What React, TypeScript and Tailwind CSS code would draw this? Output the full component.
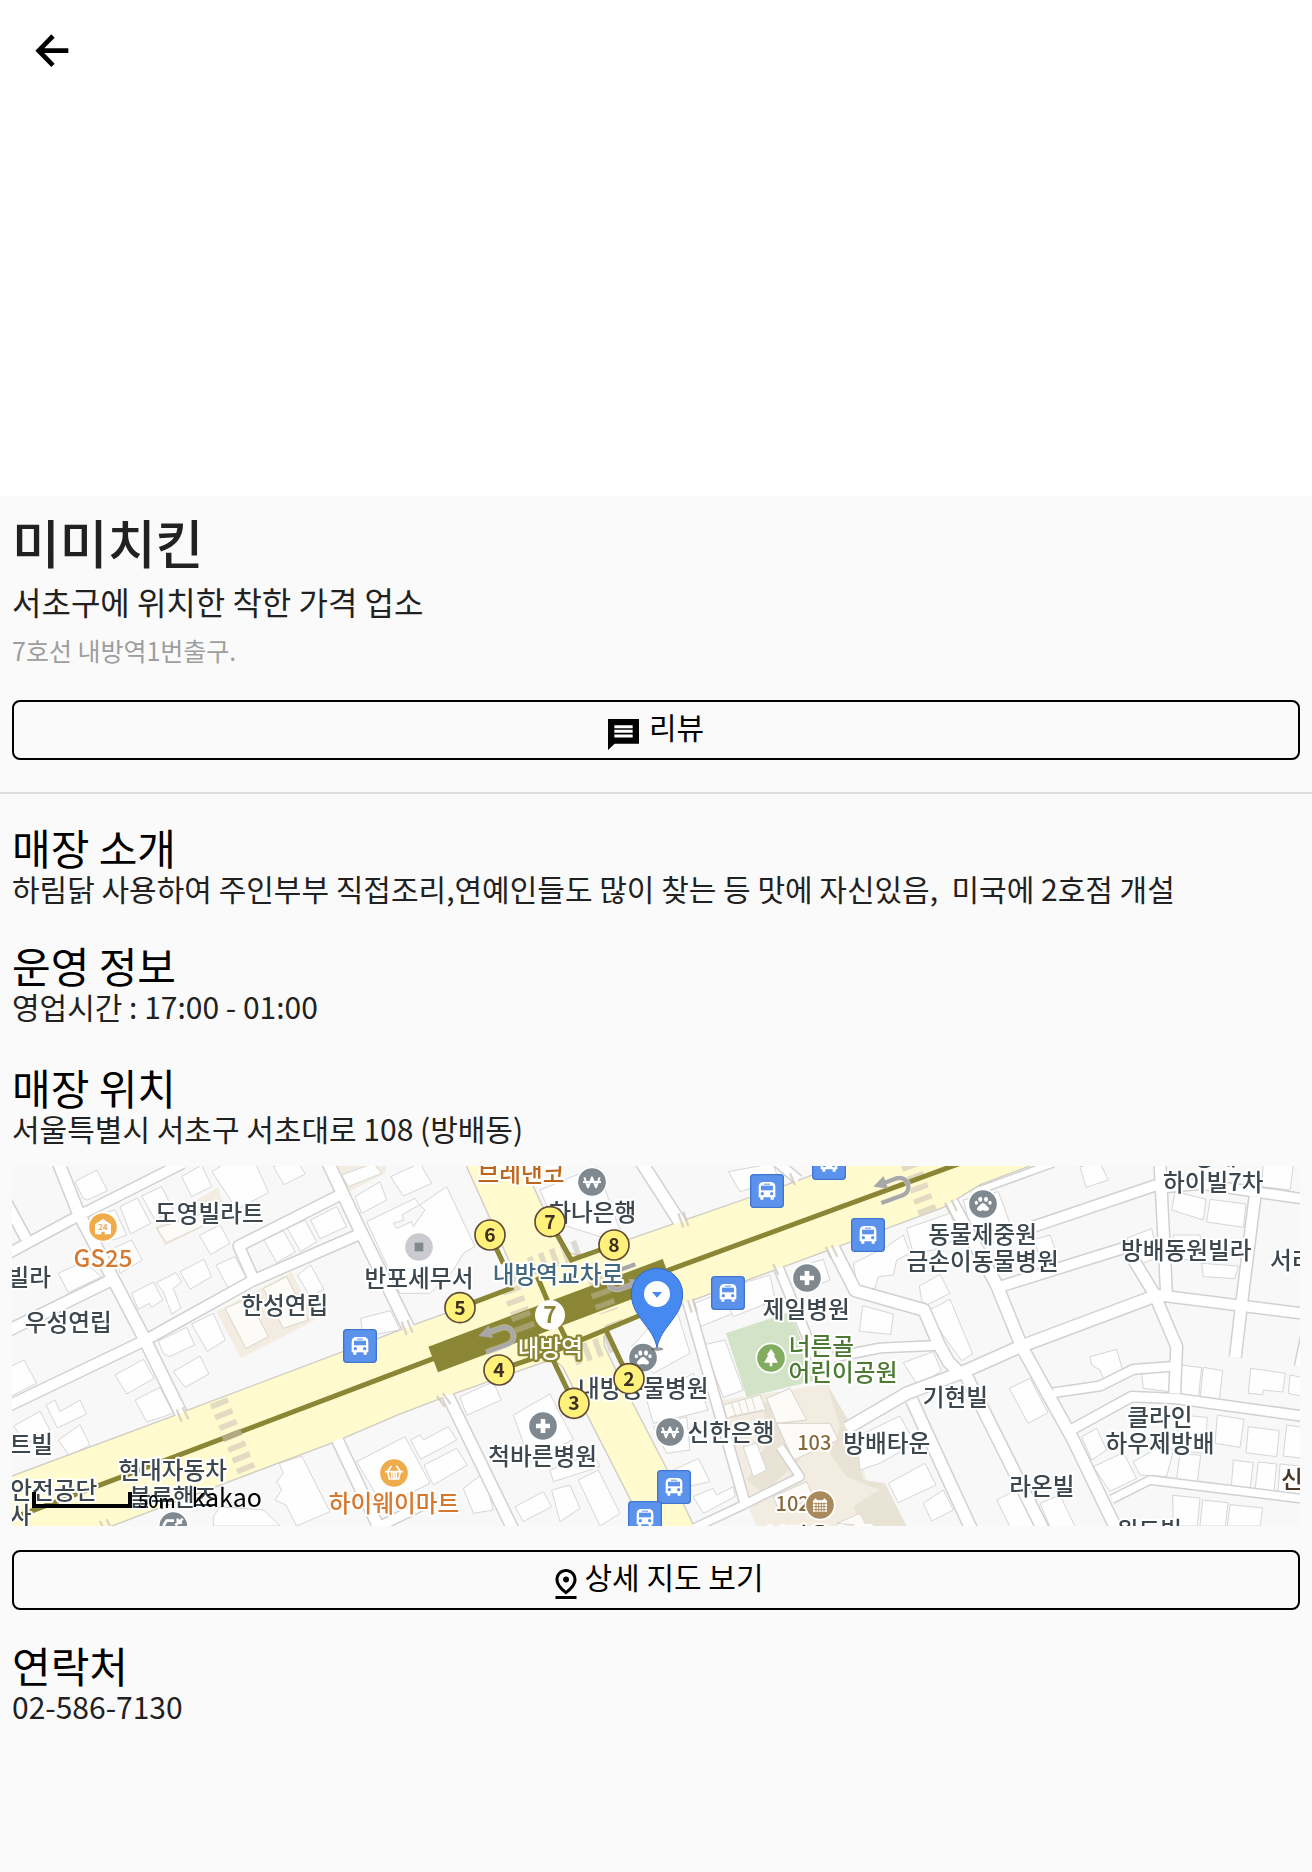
import type { ReactNode } from "react";
import { MdOutlinePinDrop } from "react-icons/md";

/* Map geometry is drawn in a 3864 x 1080 grid, three units to a pixel. */

const streets: { d: string; w: number }[] = [
  { d: "M172 0L236 160L430 530L548 770", w: 34 },
  { d: "M20 283L240 165L548 10", w: 28 },
  { d: "M10 110L78 236", w: 30 },
  { d: "M20 514L330 362", w: 32 },
  { d: "M20 740L437 540L758 362L1080 222", w: 30 },
  { d: "M760 356L716 258L1020 105", w: 30 },
  { d: "M985 10L1080 210L1228 510", w: 34 },
  { d: "M1010 835L1140 1110", w: 32 },
  { d: "M1120 1108L1300 1020", w: 26 },
  { d: "M1340 700L1540 1110", w: 32 },
  { d: "M1920 0L2048 200", w: 34 },
  { d: "M2325 0L2395 60", w: 26 },
  { d: "M2062 420L2235 1030", w: 28 },
  { d: "M2080 1105L2230 1035L2400 950L2340 860", w: 22 },
  { d: "M2330 310L2450 600", w: 26 },
  { d: "M2496 255L2566 392L2772 450L2815 550L2845 605L2880 640", w: 34 },
  { d: "M2500 592L2640 564L2815 556", w: 26 },
  { d: "M2540 805L2720 700L2880 640L3060 560L3460 410", w: 34 },
  { d: "M2735 720L2915 1110", w: 34 },
  { d: "M2895 640L3130 1110", w: 34 },
  { d: "M2855 125L2990 375L3065 560L3220 840L3350 1110", w: 34 },
  { d: "M3000 380L3400 255", w: 30 },
  { d: "M3100 200L3470 75", w: 30 },
  { d: "M2940 90L3160 10", w: 18 },
  { d: "M3480 10L3500 410", w: 32 },
  { d: "M3395 290L3462 400L3530 560L3524 700", w: 32 },
  { d: "M3470 85L3600 72L3920 118", w: 28 },
  { d: "M3765 110L3725 430L3706 592", w: 32 },
  { d: "M3470 405L3920 462", w: 30 },
  { d: "M3160 698L3300 678L3400 628L3530 618", w: 26 },
  { d: "M3220 806L3395 710L3530 716L3920 770", w: 28 },
  { d: "M3335 1018L3450 960L3920 1018", w: 22 },
  { d: "M3920 500L3895 620", w: 20 },
];

const blocks = [
  "M225 65L290 30L323 92L262 120L250 115Z",
  "M545 50L605 15L635 80L575 110Z",
  "M636 35L690 0L770 18L806 98L710 148Z",
  "M820 20L890 0L916 42L852 74Z",
  "M360 140L412 114L452 190L392 222Z",
  "M425 108L485 80L520 150L465 180Z",
  "M290 165L345 150L380 225L340 240Z",
  "M340 265L395 240L427 300L360 340Z",
  "M175 340L250 305L305 350L205 398Z",
  "M598 226L660 195L690 250L632 284Z",
  "M792 240L850 212L886 276L830 308Z",
  "M862 205L915 180L950 245L902 275Z",
  "M932 180L1010 140L1040 200L960 236Z",
  "M540 335L612 298L635 350L570 388Z",
  "M648 315L705 290L740 355L684 384Z",
  "M395 400L460 366L488 420L455 442L448 430L415 448Z",
  "M468 368L528 338L545 365L520 385L543 445L515 462L490 395Z",
  "M892 345L932 315L972 388L930 410Z",
  "M475 543L560 502L584 555L508 590L490 580Z",
  "M575 492L640 460L676 540L622 574Z",
  "M520 635L600 588L627 642L555 682Z",
  "M345 645L430 598L462 655L380 702Z",
  "M405 720L480 682L520 760L440 786Z",
  "M30 620L72 600L110 670L30 710Z",
  "M40 798L120 754L150 810L80 850Z",
  "M138 735L165 720L180 755L240 720L260 762L172 804Z",
  "M175 840L240 794L270 855L208 888Z",
  "M1082 475L1172 452L1200 510L1090 530Z",
  "M1025 45L1120 10L1145 40L1045 80Z",
  "M1065 110L1140 65L1160 120L1085 160Z",
  "M1172 50L1260 10L1295 70L1210 108Z",
  "M1100 185L1245 115L1258 135L1205 165L1212 180L1180 190L1190 205L1235 185L1240 200L1275 150L1260 135L1340 80L1425 260L1390 280L1360 330L1290 400L1200 400Z",
  "M1070 905L1215 830L1290 970L1150 1040Z",
  "M1232 840L1260 825L1270 840L1345 800L1370 840L1262 898Z",
  "M1272 915L1370 865L1402 915L1300 975Z",
  "M838 910L905 888L990 1055L890 1098L858 1035L825 1020L845 990L830 965L850 940Z",
  "M640 1070L660 1040L790 1050L840 1098H640Z",
  "M1380 710L1480 665L1504 720L1400 766Z",
  "M1540 765L1650 702L1720 838L1590 905Z",
  "M1390 985L1450 940L1480 1050L1420 1060Z",
  "M1545 1040L1630 995L1655 1040L1570 1085Z",
  "M1655 990L1710 975L1740 1045L1680 1085Z",
  "M1735 960L1795 930L1860 1060L1800 1098Z",
  "M1650 930L1780 880L1800 920L1660 965Z",
  "M1620 90L1790 20L1860 210L1800 230L1690 195L1650 160Z",
  "M1895 560L1960 490L2030 450L2070 580L1960 640Z",
  "M2085 430L2170 395L2200 460L2100 500Z",
  "M2110 555L2175 540L2230 690L2170 712Z",
  "M2160 390L2310 345L2325 420L2200 470Z",
  "M2185 35L2320 10L2335 60L2220 95Z",
  "M1940 720L2080 640L2125 750L1960 790Z",
  "M1960 800L2060 770L2070 870L2000 880Z",
  "M2010 935L2095 895L2130 965L2040 985Z",
  "M2080 1010L2140 985L2150 1005L2200 980L2205 1010L2110 1060Z",
  "M2230 860L2270 850L2300 930L2260 950Z",
  "M2430 310L2470 298L2490 360L2440 380Z",
  "M2720 205L2850 160L2880 230L2800 270L2740 280Z",
  "M2660 260L2710 225L2730 280L2690 300L2680 345L2635 350L2625 385L2590 390L2570 370L2560 310Z",
  "M2588 437L2680 462L2672 523L2578 514Z",
  "M2758 378L2820 343L2850 400L2780 435L2765 420Z",
  "M2788 450L2850 418L2918 582L2885 602L2825 520Z",
  "M2890 120L2995 95L3030 190L2920 240Z",
  "M2710 608L2800 575L2824 632L2755 680Z",
  "M2570 830L2700 768L2745 850L2640 910L2580 930Z",
  "M2665 970L2775 910L2808 975L2695 1028Z",
  "M2770 1030L2830 990L2860 1050L2795 1083Z",
  "M3028 685L3090 655L3144 758L3084 790Z",
  "M2990 1020L3060 985L3120 1100H3030Z",
  "M3120 1030L3180 1005L3225 1100H3150Z",
  "M3270 590L3350 568L3368 632L3310 655L3300 630L3275 615Z",
  "M3425 640L3510 635L3508 695L3430 685Z",
  "M3245 830L3290 805L3320 870L3275 900Z",
  "M3280 920L3370 878L3410 955L3330 994Z",
  "M3400 905L3480 860L3520 870L3500 950L3420 945Z",
  "M3545 615L3605 623L3595 714L3540 705Z",
  "M3610 622L3668 632L3658 720L3600 714Z",
  "M3752 625L3856 640L3848 696L3790 690L3788 704L3745 700Z",
  "M3870 645L3920 655V712L3865 700Z",
  "M3652 765L3732 778L3720 862L3645 850Z",
  "M3745 800L3838 812L3830 890L3738 878Z",
  "M3860 795L3920 804V896L3850 888Z",
  "M3540 765L3622 772L3612 880L3532 870Z",
  "M3540 880L3602 886L3592 966L3530 956Z",
  "M3700 900L3760 908L3750 988L3694 980Z",
  "M3775 906L3830 912L3822 996L3765 988Z",
  "M3840 912L3920 920V1006L3834 998Z",
  "M3518 1006L3600 1014L3592 1098H3520Z",
  "M3608 1020L3684 1028L3676 1098H3600Z",
  "M3690 1034L3788 1044L3780 1098H3682Z",
  "M3525 95L3618 118L3610 180L3515 150Z",
  "M3630 118L3738 132L3730 202L3620 186Z",
  "M3520 225L3600 225L3610 310L3520 290Z",
  "M3605 310L3715 318L3705 356L3610 350Z",
  "M3790 10L3880 15L3870 90L3785 80Z",
  "M3240 20L3300 10L3325 60L3258 82Z",
  "M3380 235L3455 206L3475 290L3430 310Z",
  "M3100 240L3150 225L3170 280L3120 290Z",
];

const avenue =
  "M20 956L525 768L570 750L1200 512L1245 495L1510 400Q1560 380 1542 330L1393 0H1562L1660 215Q1690 300 1760 284L2040 187L2350 80L2540 8H3110L2940 72L2830 140L2400 300L2060 425L1850 492Q1800 510 1812 560L1860 660L2000 930L2090 1120H1945L1700 640Q1680 590 1630 605L1330 710L1200 760L1000 845L330 1098L280 1120H20Z";

const exits = [
  { n: 6, x: 1470, y: 225 },
  { n: 7, x: 1650, y: 185 },
  { n: 8, x: 1842, y: 255 },
  { n: 5, x: 1380, y: 443 },
  { n: 4, x: 1497, y: 630 },
  { n: 3, x: 1722, y: 730 },
  { n: 2, x: 1887, y: 656 },
];

const buses = [
  [1080, 558],
  [2301, 93],
  [2487, 9],
  [2604, 225],
  [2184, 399],
  [2022, 981],
  [1935, 1074],
];

const slate = "#3c474e";
const orange = "#d6792f";
const green = "#4d7a33";
const brown = "#876a3c";

type Label = {
  t: string;
  x: number;
  y: number;
  fill?: string;
  size?: number;
};

const labels: Label[] = [
  { t: "도영빌라트", x: 628, y: 186 },
  { t: "GS25", x: 309, y: 320, fill: orange, size: 72 },
  { t: "빌라", x: 88, y: 378 },
  { t: "우성연립", x: 205, y: 513 },
  { t: "한성연립", x: 854, y: 463 },
  { t: "반포세무서", x: 1257, y: 380 },
  { t: "트빌", x: 94, y: 879 },
  { t: "현대자동차", x: 518, y: 957 },
  { t: "블루핸즈", x: 518, y: 1037 },
  { t: "안전공단", x: 161, y: 1016 },
  { t: "사", x: 62, y: 1093 },
  { t: "하이웨이마트", x: 1182, y: 1055, fill: orange },
  { t: "브레댄코", x: 1563, y: 67, fill: "#bf661b" },
  { t: "하나은행", x: 1778, y: 183 },
  { t: "내방동물병원", x: 1930, y: 712 },
  { t: "신한은행", x: 2193, y: 843 },
  { t: "척바른병원", x: 1628, y: 916 },
  { t: "제일병원", x: 2419, y: 474 },
  { t: "너른골", x: 2464, y: 584, fill: green },
  { t: "어린이공원", x: 2529, y: 663, fill: green },
  { t: "103", x: 2443, y: 870, fill: brown, size: 60 },
  { t: "102", x: 2378, y: 1052, fill: brown, size: 60 },
  { t: "방배타운", x: 2660, y: 876 },
  { t: "동물제중원", x: 2948, y: 250 },
  { t: "금손이동물병원", x: 2948, y: 330 },
  { t: "기현빌", x: 2866, y: 739 },
  { t: "라온빌", x: 3126, y: 1005 },
  { t: "방배", x: 3645, y: 14 },
  { t: "하이빌7차", x: 3640, y: 94 },
  { t: "방배동원빌라", x: 3559, y: 298 },
  { t: "서리", x: 3875, y: 328 },
  { t: "클라인", x: 3480, y: 797 },
  { t: "하우제방배", x: 3480, y: 877 },
  { t: "신", x: 3876, y: 985, fill: "#4a3527" },
  { t: "윈드빌", x: 3448, y: 1136 },
  { t: "브라운스톤", x: 2460, y: 1156, fill: "#4a3527" },
];

function Poi({ x, y, fill = "#7f898f", children }: { x: number; y: number; fill?: string; children: ReactNode }) {
  return (
    <g transform={`translate(${x} ${y})`}>
      <circle r="44" fill={fill} stroke="#fff" strokeWidth="5" />
      {children}
    </g>
  );
}

const won = (
  <path d="M-23 -14L-12 16L0 -14L12 16L23 -14M-27 0H27" fill="none" stroke="#fff" strokeWidth="6" strokeLinejoin="round" />
);
const cross = <path d="M-7 -21H7V-7H21V7H7V21H-7V7H-21V-7H-7Z" fill="#fff" />;
const paw = (
  <g fill="#fff">
    <ellipse cx="-8" cy="-14" rx="6" ry="8" />
    <ellipse cx="9" cy="-14" rx="6" ry="8" />
    <ellipse cx="-20" cy="-4" rx="5" ry="6" />
    <ellipse cx="21" cy="-4" rx="5" ry="6" />
    <path d="M0 -2C8 -2 10 6 16 10C22 16 14 23 6 20Q0 18 -6 20C-14 23 -22 16 -16 10C-10 6 -8 -2 0 -2Z" />
  </g>
);

function Bus({ x, y }: { x: number; y: number }) {
  return (
    <g transform={`translate(${x} ${y})`}>
      <rect x="-49" y="-49" width="98" height="98" rx="9" fill="#5b93ec" stroke="#3f74cf" strokeWidth="4" />
      <path d="M-25 -12Q-25 -27 -10 -27H10Q25 -27 25 -12V19H20V26H11V19H-11V26H-20V19H-25Z" fill="#fff" />
      <rect x="-18" y="-16" width="36" height="14" fill="#5b93ec" />
      <circle cx="-14" cy="8" r="5" fill="#5b93ec" />
      <circle cx="14" cy="8" r="5" fill="#5b93ec" />
      <rect x="-9" y="-22" width="18" height="3" fill="#5b93ec" />
    </g>
  );
}

function Crosswalk({ x, y, n, angle, w = 56 }: { x: number; y: number; n: number; angle: number; w?: number }) {
  return (
    <g transform={`translate(${x} ${y}) rotate(${angle})`} fill="#cfc6bb" opacity="0.6">
      {Array.from({ length: n }, (_, i) => (
        <rect key={i} x={-w / 2} y={i * 35} width={w} height="17" />
      ))}
    </g>
  );
}

function UTurn({ x, y, angle, flip = false }: { x: number; y: number; angle: number; flip?: boolean }) {
  return (
    <g transform={`translate(${x} ${y}) rotate(${angle})${flip ? " scale(-1 -1)" : ""}`}>
      <path d="M-50 32H18A27 27 0 0 0 18 -22H-22" fill="none" stroke="#fff" strokeWidth="17" opacity="0.5" />
      <path d="M-50 32H18A27 27 0 0 0 18 -22H-22" fill="none" stroke="#a9a8a8" strokeWidth="13" />
      <path d="M-56 -22L-16 -42V-2Z" fill="#a9a8a8" />
    </g>
  );
}

function StoreMap() {
  return (
    <svg
      viewBox="36 18 3864 1080"
      preserveAspectRatio="xMidYMid slice"
      className="block h-full w-full font-['Noto_Sans_CJK_KR','Noto_Sans',sans-serif]"
      role="img"
      aria-label="매장 위치 지도"
    >
      <rect x="0" y="0" width="3940" height="1110" fill="#f8f8f8" />

      <g fill="#f3ede1">
        <path d="M590 120L655 82L668 130L640 180L600 205L495 258L465 200L600 150Z" />
        <path d="M650 455L875 335L945 480L722 595Z" />
        <path d="M1010 10H1160L1155 40L1045 96Z" />
        <path d="M2165 720L2370 690L2480 670L2550 800L2600 960L2660 985L2720 1098H2270L2240 1030Z" />
      </g>
      <path d="M2480 670L2550 790L2590 960L2655 970L2720 1098H2590L2560 1040L2620 1000L2640 990L2540 950L2490 880L2520 800Z" fill="#e9e3d6" />
      <path d="M2290 730L2350 705L2400 900L2290 1000L2240 960L2300 850Z" fill="#e9e3d6" />
      <path d="M2178 520L2370 455L2450 660L2240 712Z" fill="#d3e3c8" />

      <g fill="#fefefe" stroke="#d6d6d6" strokeWidth="3">
        {blocks.map((d) => (
          <path key={d} d={d} />
        ))}
      </g>
      <g fill="#fdfbf8" stroke="#d9d5cd" strokeWidth="3">
        <path d="M470 205L610 160L625 190L500 248Z" />
        <path d="M675 445L745 415L805 530L738 566Z" />
        <path d="M790 385L860 350L925 480L850 505Z" />
        <path d="M2300 715L2370 685L2420 780L2330 790Z" />
        <path d="M2330 790L2490 790L2515 840L2380 900Z" />
        <path d="M2320 1010L2420 965L2440 1010L2340 1060Z" />
        <path d="M2170 735L2280 705L2298 750L2180 775Z" />
        <path d="M2190 770L2290 750M2195 730L2206 765M2215 724L2226 760M2235 718L2246 755M2255 712L2266 750" />
        <path d="M2510 1090L2580 1060L2600 1098Z" />
      </g>

      <g fill="none" strokeLinejoin="round">
        {streets.map((s) => (
          <path key={s.d} d={s.d} stroke="#d1d1d1" strokeWidth={s.w + 9} />
        ))}
        <path d={avenue} stroke="#d0ccc4" strokeWidth="8" />
        {streets.map((s) => (
          <path key={s.d} d={s.d} stroke="#fff" strokeWidth={s.w} />
        ))}
      </g>
      <path d={avenue} fill="#fffbcf" />
      <g stroke="#d3cbc2" strokeWidth="7" opacity="0.8">
        <path d="M530 748L545 785M548 742L565 778M1205 485L1220 525M1222 480L1238 518M300 1083L312 1110M320 1078L332 1104" />
        <path d="M1310 708L1335 740M1328 700L1352 732M2035 160L2050 203M2050 156L2065 198M2064 420L2075 458M2078 416L2090 454" />
        <path d="M2320 312L2335 345M2478 260L2493 295M2495 255L2512 290M2835 128L2850 160M2855 120L2870 154M2370 40L2385 75" />
      </g>

      <Crosswalk x={655} y={722} n={7} angle={-22} />
      <Crosswalk x={1532} y={382} n={5} angle={-20} />
      <Crosswalk x={1790} y={352} n={5} angle={-20} />
      <Crosswalk x={2730} y={10} n={5} angle={-20} />
      <Crosswalk x={1590} y={320} n={5} angle={-110} />
      <Crosswalk x={1720} y={590} n={4} angle={-110} />

      <g fill="none" stroke="#8a8635" strokeWidth="15">
        <path d="M60 1066L1300 596L2020 325L2880 10" />
        <path d="M1470 225L1510 310M1650 185L1714 300L1842 255M1612 350L1650 440L1710 560M1380 443L1540 382M1497 630L1660 575L1930 462M1640 560L1722 730M1818 510L1887 656" />
      </g>
      <path d="M1285 560L1988 297L2016 372L1314 637Z" fill="#8a8635" />
      <path d="M1695 500L1900 430L1920 455L1712 535Z" fill="#fffbcf" />
      <g opacity="0.7">
        <Crosswalk x={1560} y={460} n={2} angle={-20} w={60} />
        <Crosswalk x={1800} y={392} n={2} angle={-20} w={60} />
      </g>
      <g transform="translate(696 826) rotate(-22)">
        <rect x="-30" y="-9" width="60" height="18" fill="#b3a983" />
      </g>

      <UTurn x={1495} y={530} angle={-20} />
      <UTurn x={2680} y={82} angle={-20} />
      <UTurn x={1870} y={360} angle={-20} flip />

      {buses.map(([x, y]) => (
        <Bus key={`${x}-${y}`} x={x} y={y} />
      ))}

      <Poi x={309} y={201} fill="#f0ab4b">
        <path d="M-24 22V-8L0 -24L24 -8V22H5V14H-5V22Z" fill="#fff" />
        <text y="9" textAnchor="middle" fontSize="24" fontWeight="700" fill="#f0ab4b">24</text>
      </Poi>
      <Poi x={1182} y={939} fill="#f0ab4b">
        <path d="M-20 -4L-8 -20M20 -4L8 -20M-25 -4H25M-19 -4L-14 18H14L19 -4M-7 -2V16M0 -2V16M7 -2V16" fill="none" stroke="#fff" strokeWidth="5" strokeLinecap="round" />
      </Poi>
      <Poi x={1257} y={261} fill="#cacbd0">
        <rect x="-13" y="-13" width="26" height="26" fill="#7f898f" />
      </Poi>
      <Poi x={520} y={1098}>
        <path d="M-28 8V-4L-20 -16H2M-28 6H28M6 -2L20 -14M14 -22Q10 -8 26 -10M28 -22L20 -14" fill="none" stroke="#fff" strokeWidth="8" />
      </Poi>
      <Poi x={1776} y={66}>{won}</Poi>
      <Poi x={2010} y={816}>{won}</Poi>
      <Poi x={1629} y={798}>{cross}</Poi>
      <Poi x={2421} y={354}>{cross}</Poi>
      <Poi x={1929} y={593}>{paw}</Poi>
      <Poi x={2949} y={132}>{paw}</Poi>
      <Poi x={2313} y={594} fill="#82ad5f">
        <path d="M0 -27L13 -8H8L21 14H4V25H-4V14H-21L-8 -8H-13Z" fill="#fff" />
      </Poi>

      <g fontSize="71" fontWeight="500" textAnchor="middle" strokeLinejoin="round" paintOrder="stroke">
        {labels.map((l) => (
          <text key={l.t} x={l.x} y={l.y} fill={l.fill ?? slate} fontSize={l.size} stroke="#fff" strokeWidth="12">
            {l.t}
          </text>
        ))}
        <text x="1674" y="369" fill="#41687f" stroke="#fff" strokeWidth="12">내방역교차로</text>
        <text x="1651" y="592" fill="#fff" stroke="#8a8635" strokeWidth="14">내방역</text>
      </g>

      <Poi x={2460} y={1035} fill="#a98a5c">
        <path d="M-21 -12L-14 -20L-7 -14L0 -14L7 -14L14 -20L21 -12V20H-21Z" fill="#fff" />
        <path d="M-20 -4H20M-20 5H20M-20 14H20M-12 -8V20M-4 -8V20M4 -8V20M12 -8V20" stroke="#a98a5c" strokeWidth="3" />
      </Poi>

      <circle cx="1650" cy="465" r="45" fill="#fff" />
      <text x="1650" y="489" fontSize="68" fontWeight="700" textAnchor="middle" fill="#8a8635">7</text>
      {exits.map((e) => (
        <g key={e.n}>
          <circle cx={e.x} cy={e.y} r="45" fill="#fff17a" stroke="#5f4b38" strokeWidth="5" />
          <text x={e.x} y={e.y + 21} fontSize="58" fontWeight="700" textAnchor="middle" fill="#3d2f22">
            {e.n}
          </text>
        </g>
      ))}

      <ellipse cx="1972" cy="567" rx="18" ry="5" fill="#333" opacity="0.5" />
      <path d="M1971 563C1960 500 1894 470 1894 402A77 77 0 0 1 2048 402C2048 470 1982 500 1971 563Z" fill="#4689f0" stroke="#3469c4" strokeWidth="3" />
      <circle cx="1971" cy="402" r="39" fill="#fff" />
      <path d="M1956 396H1986L1971 413Z" fill="#4689f0" />
    </svg>
  );
}

function BackIcon() {
  return (
    <svg viewBox="0 0 120 120" className="size-10" fill="none" stroke="#000" strokeWidth="14" aria-hidden="true">
      <path d="M109 62H24M63 18L20 62L63 106" />
    </svg>
  );
}

function ReviewIcon() {
  return (
    <svg viewBox="0 0 93 93" className="size-[31px]" aria-hidden="true">
      <path d="M0 0H93V74H20L0 93Z" fill="#000" />
      <path d="M19 23H74M19 37H74M19 51H74" stroke="#fff" strokeWidth="9" />
    </svg>
  );
}

function Section({ title, children, className = "" }: { title: string; children: ReactNode; className?: string }) {
  return (
    <section className={className}>
      <h2 className="text-[42px] leading-[42px] font-normal text-black">{title}</h2>
      <p className="text-[30px] leading-10 whitespace-pre-wrap">{children}</p>
    </section>
  );
}

const outlineButton =
  "flex h-15 w-full items-center justify-center rounded-lg border-2 border-black text-[30px] leading-10 text-black";

export default function App() {
  return (
    <div className="min-h-screen bg-[#fafafa] pb-20 font-['Noto_Sans_CJK_KR','Noto_Sans',sans-serif] text-[#212121]">
      <header className="h-[496px] bg-white px-8 pt-[30px]">
        <button type="button" aria-label="뒤로 가기" className="block">
          <BackIcon />
        </button>
      </header>

      <main>
        <div className="px-3 pt-[11px]">
          <h1 className="text-[52px] leading-[70px] font-medium">미미치킨</h1>
          <p className="text-[32px] leading-12">서초구에 위치한 착한 가격 업소</p>
          <p className="text-[25px] leading-[50px] text-[#9e9e9e]">7호선 내방역1번출구.</p>
          <button type="button" className={`mt-[25px] gap-2.5 ${outlineButton}`}>
            <span className="pt-2">
              <ReviewIcon />
            </span>
            <span className="pb-2">리뷰</span>
          </button>
        </div>

        <hr className="mt-8 border-t-2 border-[#dddddd]" />

        <div className="px-3 pt-8">
          <Section title="매장 소개">
            하림닭 사용하여 주인부부 직접조리,연예인들도 많이 찾는 등 맛에 자신있음,{"  "}미국에 2호점 개설
          </Section>
          <Section title="운영 정보" className="mt-9">영업시간 : 17:00 - 01:00</Section>
          <Section title="매장 위치" className="mt-10">서울특별시 서초구 서초대로 108 (방배동)</Section>

          <div className="relative mt-[18px] h-[360px] overflow-hidden">
            <StoreMap />
            <div className="absolute bottom-3.5 left-5 flex items-end text-black">
              <div className="mb-1 h-4 w-[100px] border-4 border-t-0 border-black" />
              <span className="ml-1.5 text-[18px] leading-6 font-medium">50m</span>
              <span className="ml-4 text-[25px] leading-8 font-normal">kakao</span>
            </div>
          </div>

          <button type="button" className={`mt-6 ${outlineButton}`}>
            <MdOutlinePinDrop className="mt-2 size-9" aria-hidden="true" />
            <span className="pb-2">상세 지도 보기</span>
          </button>

          <Section title="연락처" className="mt-[34px]">02-586-7130</Section>
        </div>
      </main>
    </div>
  );
}
